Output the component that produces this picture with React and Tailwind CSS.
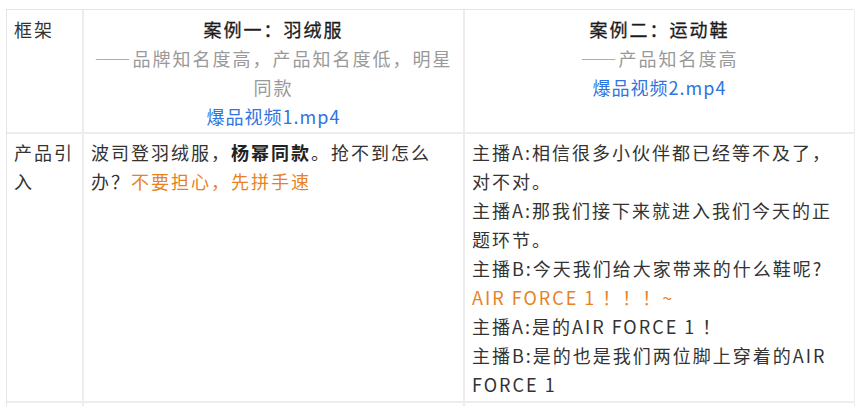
export default function App() {
  const font = { fontFamily: '"Noto Sans CJK SC", "Noto Sans", sans-serif' };
  return (
    <div lang="zh-CN" className="w-[857px] h-[406px] overflow-hidden bg-white pl-[6px] pt-[9px]" style={font}>
      <div className="w-[848px] text-[18px] leading-[29px] tracking-[2px] text-[#333333]">
        <div className="grid grid-cols-[77px_381px_390px] border-t border-l border-[#e4e4e4]">
          <div className="border-r-2 border-b-2 border-[#ededed] px-[7px] pt-[5px] pb-[1px]">框架</div>
          <div className="border-r-2 border-b-2 border-[#ededed] px-[7px] pt-[5px] pb-[1px] text-center">
            <div className="text-[#1c1c1c] [-webkit-text-stroke:0.3px_#1c1c1c]">案例一：羽绒服</div>
            <div className="text-[#999999]">
              <span className="[font-feature-settings:'fwid']">——</span>品牌知名度高，产品知名度低，明星同款
            </div>
            <div className="text-[#2f74e0] tracking-[1px]">爆品视频1.mp4</div>
          </div>
          <div className="border-r border-b-2 border-[#ededed] px-[7px] pt-[5px] pb-[1px] text-center">
            <div className="text-[#1c1c1c] [-webkit-text-stroke:0.3px_#1c1c1c]">案例二：运动鞋</div>
            <div className="text-[#999999]">
              <span className="[font-feature-settings:'fwid']">——</span>产品知名度高
            </div>
            <div className="text-[#2f74e0] tracking-[1px]">爆品视频2.mp4</div>
          </div>

          <div className="border-r-2 border-b-2 border-[#ededed] px-[7px] pt-[4px] pb-[2px]">产品引入</div>
          <div className="border-r-2 border-b-2 border-[#ededed] px-[7px] pt-[4px] pb-[2px]">
            <div>
              波司登羽绒服，<span className="font-bold text-[#222222]">杨幂同款</span>。抢不到怎么办？
              <span className="text-[#e8821e]">不要担心，先拼手速</span>
            </div>
          </div>
          <div className="border-r border-b-2 border-[#ededed] px-[7px] pt-[4px] pb-[2px]">
            <div>主播A:相信很多小伙伴都已经等不及了，对不对。</div>
            <div>主播A:那我们接下来就进入我们今天的正题环节。</div>
            <div>主播B:今天我们给大家带来的什么鞋呢?</div>
            <div className="text-[#e8821e]">AIR FORCE 1 ！！！~</div>
            <div>主播A:是的AIR FORCE 1 ！</div>
            <div>主播B:是的也是我们两位脚上穿着的AIR FORCE 1</div>
          </div>

          <div className="border-r-2 border-[#ededed] h-[20px]"></div>
          <div className="border-r-2 border-[#ededed] h-[20px]"></div>
          <div className="border-r border-[#ededed] h-[20px]"></div>
        </div>
      </div>
    </div>
  );
}
